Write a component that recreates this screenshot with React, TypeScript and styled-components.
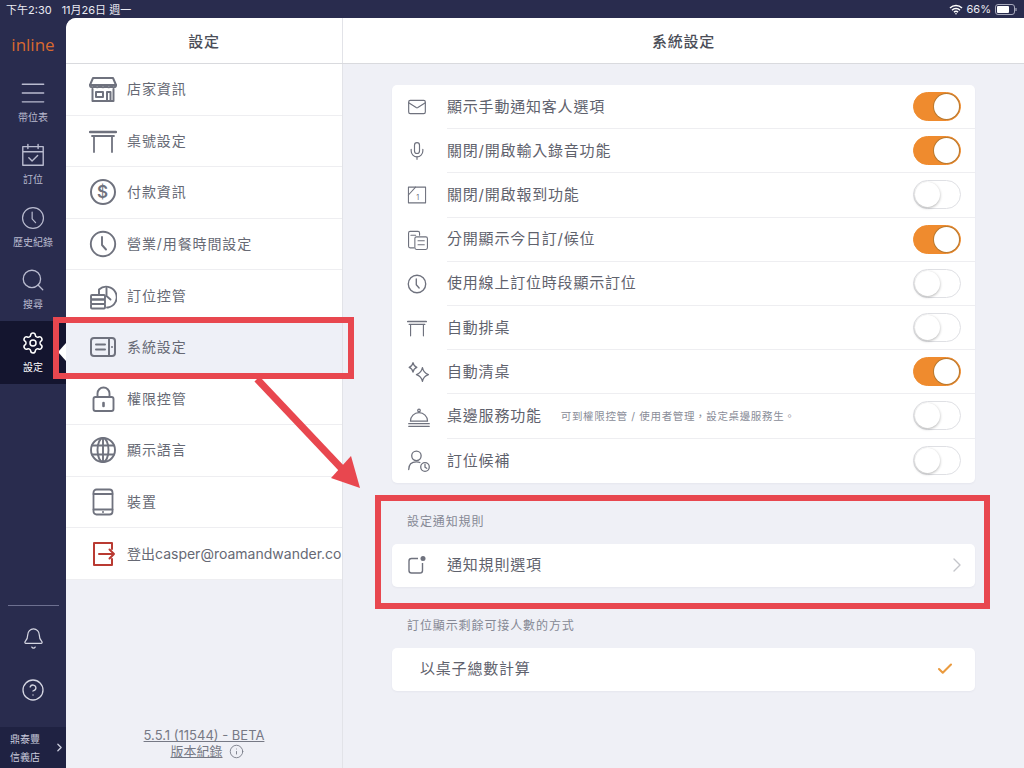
import { ReactNode } from 'react'
import styled, { createGlobalStyle } from 'styled-components'
import { Bell, Check, ChevronRight, CircleHelp, Info, Mail, Mic, Search, Settings } from 'lucide-react'

const GlobalStyle = createGlobalStyle`
  html, body {
    margin: 0;
    padding: 0;
    background: #292c4e;
  }
  * {
    box-sizing: border-box;
  }
`

const Page = styled.div`
  position: relative;
  width: 1024px;
  height: 768px;
  overflow: hidden;
  display: flex;
  flex-direction: column;
  background: #292c4e;
  font-family: Inter, "Noto Sans CJK TC", sans-serif;
`

const StatusBar = styled.div`
  height: 18px;
  flex: none;
  display: flex;
  align-items: center;
  padding: 0 7px 0 6px;
  color: #e9eaf2;
  font-size: 11px;
`

const StatusTime = styled.span`
  margin-right: 10px;
`

const StatusRight = styled.div`
  margin-left: auto;
  display: flex;
  align-items: center;
  gap: 4px;
`

const Body = styled.div`
  flex: 1;
  display: flex;
  min-height: 0;
`

const Rail = styled.nav`
  width: 66px;
  flex: none;
  display: flex;
  flex-direction: column;
`

const Logo = styled.div`
  height: 53px;
  display: flex;
  align-items: center;
  justify-content: center;
  padding-bottom: 1px;
  color: #d8692f;
  font-family: "Open Sans", sans-serif;
  font-size: 17px;
`

const RailItem = styled.div<{ $active?: boolean }>`
  position: relative;
  height: 62.5px;
  display: flex;
  flex-direction: column;
  align-items: center;
  justify-content: center;
  gap: 5px;
  padding-bottom: 1px;
  background: ${p => (p.$active ? '#14152f' : 'transparent')};
  color: ${p => (p.$active ? '#ffffff' : '#b9bbcf')};
  font-size: 10px;
  line-height: 13px;

  ${p =>
    p.$active &&
    `
    &::after {
      content: '';
      position: absolute;
      right: 0;
      top: 22px;
      border-style: solid;
      border-width: 9px 8px 9px 0;
      border-color: transparent #ffffff transparent transparent;
    }
  `}
`

const RailIcon = styled.span`
  height: 26px;
  display: flex;
  align-items: center;
  justify-content: center;
`

const RailFooter = styled.div`
  margin-top: auto;
  display: flex;
  flex-direction: column;
`

const RailDivider = styled.div`
  height: 1px;
  margin: 0 7px 6px 8px;
  background: #6d7090;
`

const RailButton = styled.div`
  height: 52px;
  display: flex;
  align-items: center;
  justify-content: center;
  color: #d5d6e2;
`

const StoreSwitch = styled.div`
  height: 41px;
  margin-top: 11px;
  display: flex;
  align-items: center;
  justify-content: space-between;
  padding: 0 0 0 10px;
  background: #1f2242;
  color: #c9cbdc;
  font-size: 10px;
  line-height: 18px;
`

const Sheet = styled.div`
  flex: 1;
  display: flex;
  flex-direction: column;
  min-width: 0;
  background: #eff0f6;
  border-top-left-radius: 10px;
  overflow: hidden;
`

const SheetHeader = styled.header`
  height: 46px;
  flex: none;
  display: flex;
  background: #ffffff;
  border-bottom: 1px solid #d9dade;
`

const HeaderCell = styled.div<{ $wide?: boolean }>`
  ${p => (p.$wide ? 'flex: 1;' : 'width: 277px;')}
  ${p => (p.$wide ? '' : 'border-right: 1px solid #e2e3e8;')}
  display: flex;
  align-items: center;
  justify-content: center;
  color: #4b4e58;
  font-size: 15px;
  font-weight: 500;
  letter-spacing: 0.7px;
`

const Columns = styled.div`
  flex: 1;
  display: flex;
  min-height: 0;
`

const Master = styled.aside`
  width: 277px;
  flex: none;
  display: flex;
  flex-direction: column;
  border-right: 1px solid #e2e3e8;
`

const MasterList = styled.div`
  background: #ffffff;
`

const MasterRow = styled.div<{ $active?: boolean }>`
  height: 51.6px;
  display: flex;
  align-items: center;
  gap: 10px;
  padding-left: 23px;
  background: ${p => (p.$active ? '#eef0f7' : '#ffffff')};
  border-bottom: 1px solid #eeeef1;
  color: #666974;
  font-size: 14px;
  letter-spacing: 0.9px;
  white-space: nowrap;
  overflow: hidden;
`

const MasterLabel = styled.span`
  margin-bottom: 2px;
`

const MasterIcon = styled.span<{ $red?: boolean }>`
  width: 28px;
  height: 28px;
  flex: none;
  display: flex;
  align-items: center;
  justify-content: center;
  color: ${p => (p.$red ? '#b93a32' : '#6f727e')};
`

const LogoutText = styled(MasterLabel)`
  letter-spacing: 0;
`

const VersionBlock = styled.div`
  margin-top: auto;
  padding-bottom: 9px;
  display: flex;
  flex-direction: column;
  align-items: center;
  color: #767985;
  font-size: 13px;
  line-height: 16px;
`

const VersionLink = styled.span`
  text-decoration: underline;
  display: inline-flex;
`

const VersionLine = styled.div`
  display: flex;
  align-items: center;
  gap: 6px;
  padding-left: 6px;
`

const Detail = styled.main`
  flex: 1;
  padding: 21px 49px 0;
  min-width: 0;
`

const Card = styled.section`
  background: #ffffff;
  border-radius: 5px;
  box-shadow: 0 1px 2px rgba(60, 64, 90, 0.05);
`

const SettingRow = styled.div<{ $h?: number }>`
  height: ${p => p.$h ?? 44.2}px;
  display: flex;
  align-items: stretch;
`

const RowIcon = styled.span`
  width: 55px;
  flex: none;
  display: flex;
  align-items: center;
  padding-left: 15px;
  color: #6f727e;
`

const RowBody = styled.div<{ $last?: boolean }>`
  flex: 1;
  min-width: 0;
  display: flex;
  align-items: center;
  padding-right: 14px;
  border-bottom: ${p => (p.$last ? 'none' : '1px solid #eeeef1')};
`

const RowTitle = styled.span`
  margin-bottom: 3px;
  color: #5f626d;
  font-size: 15px;
  letter-spacing: 0.8px;
`

const RowHint = styled.span`
  margin-left: 19px;
  color: #8a8d98;
  font-size: 10.5px;
  letter-spacing: 0.65px;
`

const RowEnd = styled.span<{ $color?: string }>`
  margin-left: auto;
  display: flex;
  align-items: center;
  color: ${p => p.$color ?? '#c4c5ca'};
`

const ChevronRowBody = styled(RowBody)`
  padding-right: 6px;
`

const PlainRowBody = styled(RowBody)`
  padding-left: 28px;
  padding-right: 21px;
`

const Toggle = styled.span<{ $on?: boolean }>`
  position: relative;
  width: 48px;
  height: 29px;
  border-radius: 15px;
  background: ${p => (p.$on ? '#ef8b2e' : '#ffffff')};
  border: 1px solid ${p => (p.$on ? '#ef8b2e' : '#dfe0e4')};

  &::after {
    content: '';
    position: absolute;
    top: 1px;
    left: ${p => (p.$on ? '20px' : '1px')};
    width: 25px;
    height: 25px;
    border-radius: 50%;
    background: #ffffff;
    box-shadow: ${p => (p.$on ? '0 0 0 1px #b9792f' : '0 1px 3px rgba(0, 0, 0, 0.3)')};
  }
`

const SectionLabel = styled.div`
  height: 20px;
  margin: 28px 0 13px;
  padding-left: 15px;
  color: #858894;
  font-size: 12px;
  line-height: 22px;
  letter-spacing: 0.9px;
`

const Callout = styled.div`
  position: absolute;
  border: 6px solid #e8474f;
  pointer-events: none;
`

const MenuCallout = styled(Callout)`
  left: 53px;
  top: 317px;
  width: 301px;
  height: 62px;
`

const RulesCallout = styled(Callout)`
  left: 375px;
  top: 495px;
  width: 615px;
  height: 114px;
`

const ArrowLayer = styled.svg`
  position: absolute;
  left: 0;
  top: 0;
  pointer-events: none;
`

const Ico = ({ size = 28, sw = 1.6, children }: { size?: number; sw?: number; children: ReactNode }) => (
  <svg width={size} height={size} viewBox="0 0 28 28" fill="none" stroke="currentColor" strokeWidth={sw} strokeLinecap="round" strokeLinejoin="round">
    {children}
  </svg>
)

const ClockIcon = ({ size, sw }: { size?: number; sw?: number }) => (
  <Ico size={size} sw={sw}>
    <circle cx="14" cy="14" r="12.2" />
    <path d="M13 7v8l4 4.5" />
  </Ico>
)

const StoreIcon = () => (
  <Ico sw={2}>
    <path d="M4 3h20l3 7H1z" />
    <path d="M1 10c0 3 4.500 3 4.500 0 0 3 5.500 3 5.500 0 0 3 6 3 6 0 0 3 5.500 3 5.500 0 0 3 4.500 3 4.500 0" />
    <path d="M3.500 14v12h21V14" />
    <path d="M7 17h7v5H7zM18 26v-9h3.500v9" />
  </Ico>
)

const TableIcon = ({ size, sw = 1.8 }: { size?: number; sw?: number }) => (
  <Ico size={size} sw={sw}>
    <path d="M1 5h26" strokeWidth={sw + 0.6} />
    <path d="M3 9h22M5 9v16M23 9v16" />
  </Ico>
)

const DollarIcon = () => (
  <Ico sw={2}>
    <circle cx="14" cy="14" r="12" />
    <text x="14" y="20" textAnchor="middle" fontSize="17" fontWeight="600" fill="currentColor" stroke="none" fontFamily="Inter, sans-serif">$</text>
  </Ico>
)

const BookingControlIcon = () => (
  <Ico sw={1.9}>
    <path d="M10 12V7.500a10.500 10.500 0 1 1 9 18h-1" />
    <path d="M17.500 6v8l4 3.500" />
    <rect x="2" y="13" width="14" height="4.500" rx="1" />
    <rect x="2" y="17.500" width="14" height="4.500" rx="1" />
    <rect x="2" y="22" width="14" height="4.500" rx="1" />
  </Ico>
)

const SystemIcon = () => (
  <Ico sw={2}>
    <rect x="2" y="5" width="24" height="18" rx="3" />
    <path d="M7 11.500h9M7 16.500h9M20 5v18" />
    <path d="M23 14h.01" />
  </Ico>
)

const LockIcon = () => (
  <Ico sw={1.9}>
    <rect x="4.500" y="12" width="20" height="14" rx="2" />
    <path d="M8.500 12V8.500a6 6 0 0 1 12 0V12" />
    <path d="M14.500 18v3" strokeWidth="2.600" />
  </Ico>
)

const GlobeIcon = () => (
  <Ico sw={1.9}>
    <circle cx="14" cy="14" r="12" />
    <ellipse cx="14" cy="14" rx="5.500" ry="12" />
    <path d="M14 2v24M3 9.500h22M3 18.500h22" />
  </Ico>
)

const TabletIcon = () => (
  <Ico sw={1.8}>
    <rect x="4.500" y="1.500" width="19" height="25" rx="3" />
    <path d="M4.500 6h19M4.500 21.500h19" />
    <path d="M14 24h.01" strokeWidth="2" />
  </Ico>
)

const LogoutIcon = () => (
  <Ico sw={2}>
    <path d="M23 9V3H5v22h18v-6" />
    <path d="M10 14h15M20.500 9.500 25 14l-4.500 4.500" />
  </Ico>
)

const CalendarIcon = () => (
  <Ico size={26} sw={1.5}>
    <path d="M3 5h22v20H3zM3 10.500h22M8.500 2.500V7M19.500 2.500V7" />
    <path d="m9.500 17 3.500 3.500 6-6" />
  </Ico>
)

const MenuIcon = () => (
  <Ico size={26} sw={1.5}>
    <path d="M2.500 4.500h23M2.500 14h23M2.500 23.500h23" />
  </Ico>
)

const ReminderBoxIcon = () => (
  <Ico size={20} sw={1.5}>
    <rect x="2" y="3" width="24" height="22" />
    <path d="M2 14 12 3" />
    <text x="15" y="21" textAnchor="middle" fontSize="10" fill="currentColor" stroke="none" fontFamily="Inter, sans-serif">1</text>
  </Ico>
)

const SplitListIcon = () => (
  <Ico size={22} sw={1.4}>
    <path d="M9 24H4a2 2 0 0 1-2-2V5a2 2 0 0 1 2-2h10a2 2 0 0 1 2 2v3" />
    <path d="M5 8h6" />
    <rect x="10" y="10" width="16" height="16" rx="2" />
    <path d="M14 15h8M14 20h8" />
  </Ico>
)

const SparkleIcon = () => (
  <Ico size={24} sw={1.5}>
    <path d="M7 3c.6 3 1.500 4.500 4.500 5.500C8.500 9.500 7.600 11 7 14c-.6-3-1.500-4.500-4.500-5.500C5.500 7.500 6.400 6 7 3z" />
    <path d="M18 9c.9 4.500 2.200 6.500 7 8-4.800 1.500-6.100 3.500-7 8-.9-4.500-2.200-6.500-7-8 4.800-1.500 6.100-3.500 7-8z" />
  </Ico>
)

const ServiceBellIcon = () => (
  <Ico size={24} sw={1.4}>
    <path d="M4 20a10 10 0 0 1 20 0z" />
    <circle cx="14" cy="7.500" r="1.500" />
    <path d="M2 23h24M2 26h24" />
  </Ico>
)

const WaitlistIcon = () => (
  <Ico size={24} sw={1.5}>
    <circle cx="11" cy="8" r="5.500" />
    <path d="M2 24c0-5.500 3-9 9-9 1.500 0 3 .3 4 .8" />
    <circle cx="21" cy="21" r="5" />
    <path d="M21 18v3.200l2 1.300" />
  </Ico>
)

const RuleDotIcon = () => (
  <svg width="20" height="20" viewBox="0 0 20 20" fill="none" stroke="currentColor" strokeWidth="1.4">
    <path d="M11 3.500H4.500a2.500 2.500 0 0 0-2.500 2.500v9.500A2.500 2.500 0 0 0 4.500 18H13a2.500 2.500 0 0 0 2.500-2.500V8" />
    <circle cx="16" cy="3.500" r="2.500" fill="currentColor" stroke="none" />
  </svg>
)

const WifiIcon = () => (
  <svg width="14" height="11" viewBox="0 0 14 11" fill="none" stroke="#ffffff" strokeWidth="1.5">
    <path d="M1 4a8.500 8.500 0 0 1 12 0M3 6.200a5.700 5.700 0 0 1 8 0M5 8.200a2.800 2.800 0 0 1 4 0" />
    <circle cx="7" cy="9.700" r="0.800" fill="#ffffff" stroke="none" />
  </svg>
)

const BatteryIcon = () => (
  <svg width="22" height="11" viewBox="0 0 22 11" fill="none">
    <rect x="0.500" y="0.500" width="19" height="10" rx="2.500" stroke="#a8aabd" />
    <rect x="2" y="2" width="12" height="7" rx="1" fill="#ffffff" />
    <path d="M21 4v3" stroke="#a8aabd" strokeWidth="1.200" />
  </svg>
)

const railItems = [
  { label: '帶位表', icon: <MenuIcon /> },
  { label: '訂位', icon: <CalendarIcon /> },
  { label: '歷史紀錄', icon: <ClockIcon size={24} sw={1.4} /> },
  { label: '搜尋', icon: <Search size={26} strokeWidth={1.2} /> },
  { label: '設定', icon: <Settings size={24} strokeWidth={1.5} />, active: true },
]

const masterItems = [
  { label: '店家資訊', icon: <StoreIcon /> },
  { label: '桌號設定', icon: <TableIcon /> },
  { label: '付款資訊', icon: <DollarIcon /> },
  { label: '營業/用餐時間設定', icon: <ClockIcon sw={1.9} /> },
  { label: '訂位控管', icon: <BookingControlIcon /> },
  { label: '系統設定', icon: <SystemIcon />, active: true },
  { label: '權限控管', icon: <LockIcon /> },
  { label: '顯示語言', icon: <GlobeIcon /> },
  { label: '裝置', icon: <TabletIcon /> },
]

const settings = [
  { title: '顯示手動通知客人選項', icon: <Mail size={20} strokeWidth={1.4} />, on: true },
  { title: '關閉/開啟輸入錄音功能', icon: <Mic size={20} strokeWidth={1.4} />, on: true },
  { title: '關閉/開啟報到功能', icon: <ReminderBoxIcon />, on: false },
  { title: '分開顯示今日訂/候位', icon: <SplitListIcon />, on: true },
  { title: '使用線上訂位時段顯示訂位', icon: <ClockIcon size={20} sw={1.9} />, on: false },
  { title: '自動排桌', icon: <TableIcon size={20} sw={1.6} />, on: false },
  { title: '自動清桌', icon: <SparkleIcon />, on: true },
  { title: '桌邊服務功能', hint: '可到權限控管 / 使用者管理，設定桌邊服務生。', icon: <ServiceBellIcon />, on: false },
  { title: '訂位候補', icon: <WaitlistIcon />, on: false },
]

export default function App() {
  return (
    <Page>
      <GlobalStyle />
      <StatusBar>
        <StatusTime>下午2:30</StatusTime>
        <span>11月26日 週一</span>
        <StatusRight>
          <WifiIcon />
          <span>66%</span>
          <BatteryIcon />
        </StatusRight>
      </StatusBar>
      <Body>
        <Rail>
          <Logo>inline</Logo>
          {railItems.map(item => (
            <RailItem key={item.label} $active={item.active}>
              <RailIcon>{item.icon}</RailIcon>
              <span>{item.label}</span>
            </RailItem>
          ))}
          <RailFooter>
            <RailDivider />
            <RailButton>
              <Bell size={23} strokeWidth={1.3} />
            </RailButton>
            <RailButton>
              <CircleHelp size={24} strokeWidth={1.3} />
            </RailButton>
            <StoreSwitch>
              <span>
                鼎泰豐
                <br />
                信義店
              </span>
              <ChevronRight size={13} strokeWidth={2.5} />
            </StoreSwitch>
          </RailFooter>
        </Rail>
        <Sheet>
          <SheetHeader>
            <HeaderCell>設定</HeaderCell>
            <HeaderCell $wide>系統設定</HeaderCell>
          </SheetHeader>
          <Columns>
            <Master>
              <MasterList>
                {masterItems.map(item => (
                  <MasterRow key={item.label} $active={item.active}>
                    <MasterIcon>{item.icon}</MasterIcon>
                    <MasterLabel>{item.label}</MasterLabel>
                  </MasterRow>
                ))}
                <MasterRow>
                  <MasterIcon $red>
                    <LogoutIcon />
                  </MasterIcon>
                  <LogoutText>登出casper@roamandwander.co</LogoutText>
                </MasterRow>
              </MasterList>
              <VersionBlock>
                <VersionLink>5.5.1 (11544) - BETA</VersionLink>
                <VersionLine>
                  <VersionLink>版本紀錄</VersionLink>
                  <Info size={15} strokeWidth={1.4} />
                </VersionLine>
              </VersionBlock>
            </Master>
            <Detail>
              <Card>
                {settings.map((s, i) => (
                  <SettingRow key={s.title}>
                    <RowIcon>{s.icon}</RowIcon>
                    <RowBody $last={i === settings.length - 1}>
                      <RowTitle>{s.title}</RowTitle>
                      {s.hint && <RowHint>{s.hint}</RowHint>}
                      <RowEnd>
                        <Toggle $on={s.on} />
                      </RowEnd>
                    </RowBody>
                  </SettingRow>
                ))}
              </Card>
              <SectionLabel>設定通知規則</SectionLabel>
              <Card>
                <SettingRow $h={43}>
                  <RowIcon>
                    <RuleDotIcon />
                  </RowIcon>
                  <ChevronRowBody $last>
                    <RowTitle>通知規則選項</RowTitle>
                    <RowEnd>
                      <ChevronRight size={24} strokeWidth={1.4} />
                    </RowEnd>
                  </ChevronRowBody>
                </SettingRow>
              </Card>
              <SectionLabel>訂位顯示剩餘可接人數的方式</SectionLabel>
              <Card>
                <SettingRow $h={43}>
                  <PlainRowBody $last>
                    <RowTitle>以桌子總數計算</RowTitle>
                    <RowEnd $color="#ea9a3e">
                      <Check size={18} strokeWidth={2.8} />
                    </RowEnd>
                  </PlainRowBody>
                </SettingRow>
              </Card>
            </Detail>
          </Columns>
        </Sheet>
      </Body>
      <MenuCallout />
      <RulesCallout />
      <ArrowLayer width="1024" height="768" viewBox="0 0 1024 768">
        <path d="M257 379 343 470" stroke="#e8474f" strokeWidth="7" />
        <path d="M360 488 331 478 351 456z" fill="#e8474f" />
      </ArrowLayer>
    </Page>
  )
}
